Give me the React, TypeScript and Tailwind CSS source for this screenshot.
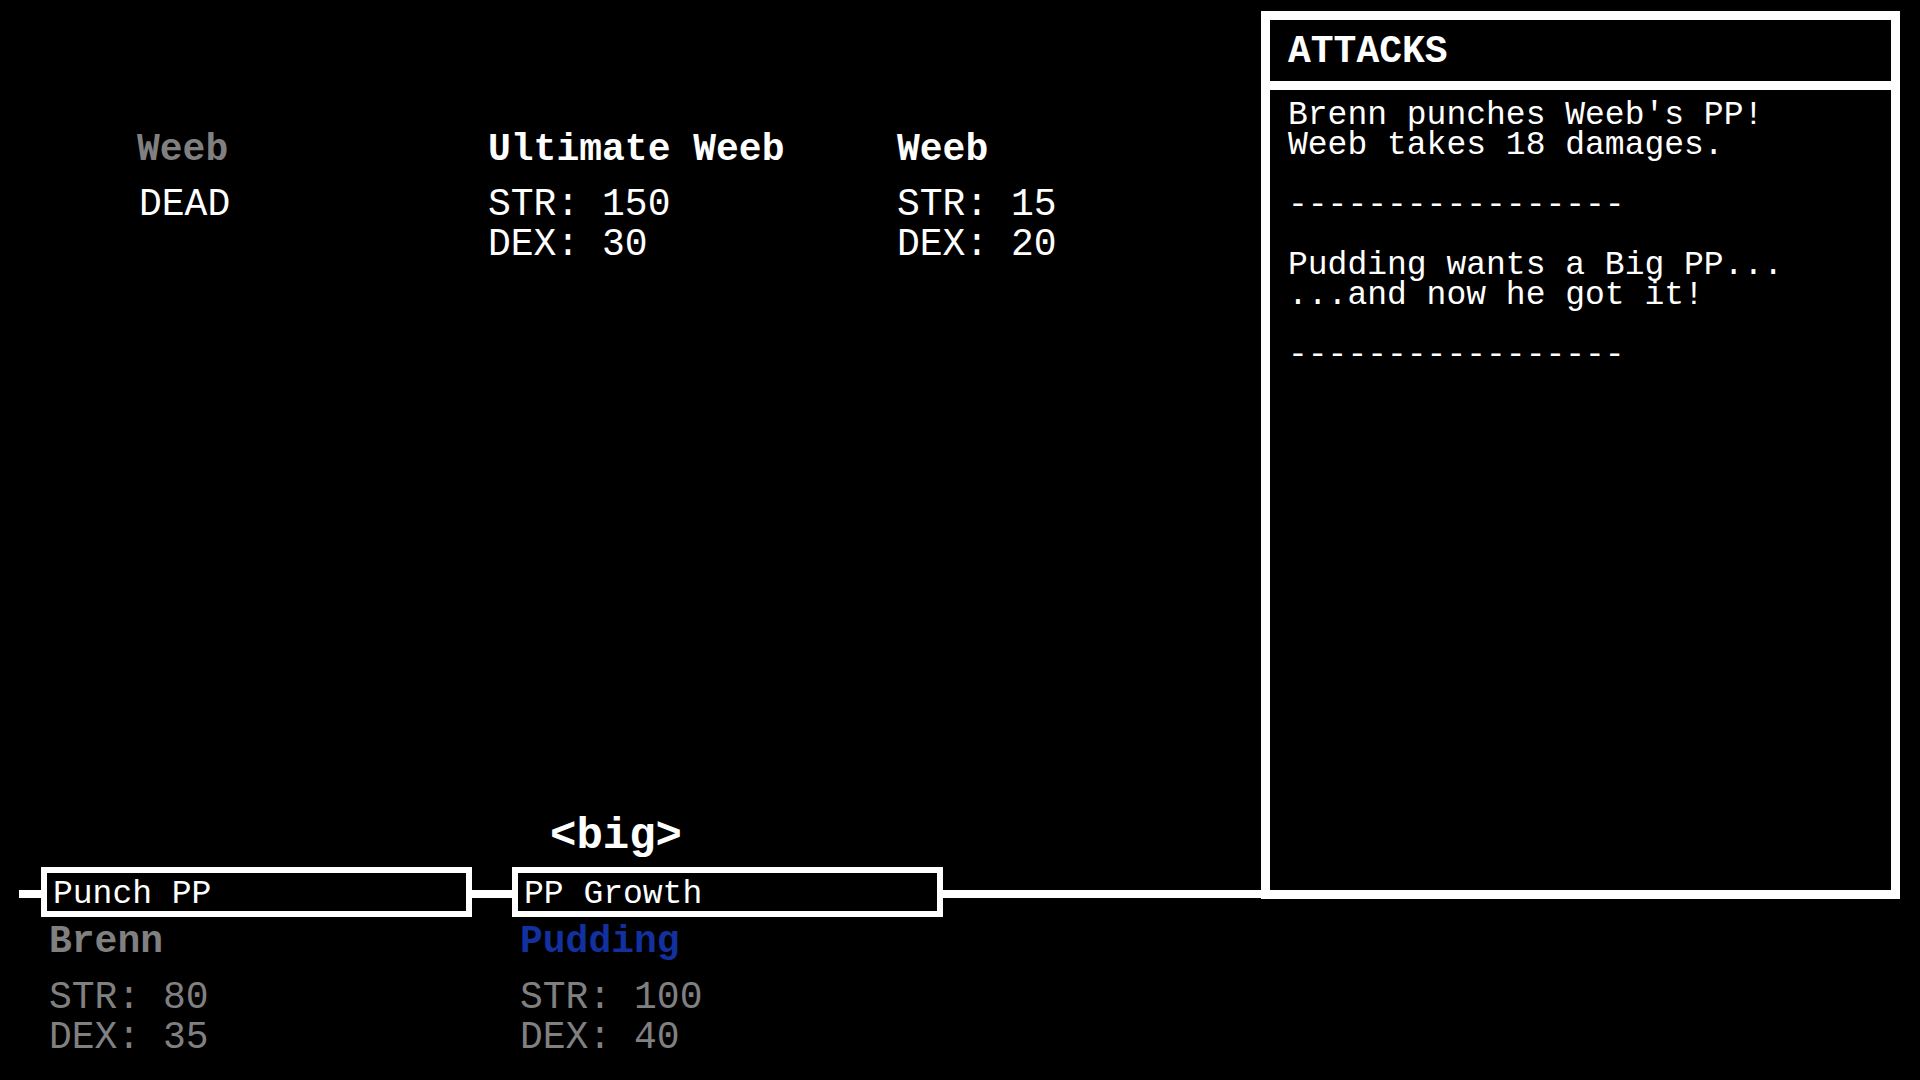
// Battle screen: enemy stats on top, skill chain with party below, attack log panel on the right.

interface Fighter {
  name: string
  dead?: boolean
  str?: number
  dex?: number
}

const enemies: { fighter: Fighter; width: string }[] = [
  { fighter: { name: 'Weeb', dead: true }, width: 'w-[351px]' },
  { fighter: { name: 'Ultimate Weeb', str: 150, dex: 30 }, width: 'w-[409px]' },
  { fighter: { name: 'Weeb', str: 15, dex: 20 }, width: 'w-[300px]' },
]

const party = [
  { name: 'Brenn', color: 'text-[#808080]', str: 80, dex: 35 },
  { name: 'Pudding', color: 'text-[#12309e]', str: 100, dex: 40 },
]

const log = `Brenn punches Weeb's PP!
Weeb takes 18 damages.

-----------------

Pudding wants a Big PP...
...and now he got it!

-----------------`

function EnemyColumn({ fighter, width }: { fighter: Fighter; width: string }) {
  return (
    <div className={`${width} shrink-0`}>
      <div
        className={`h-[40px] text-[38px] leading-[40px] font-bold ${
          fighter.dead ? 'text-[#808080]' : 'text-white'
        }`}
      >
        {fighter.name}
      </div>
      <div className="mt-[15px] text-[38px] leading-[40px] text-white whitespace-pre">
        {fighter.dead ? (
          <div className="pl-[2px]">DEAD</div>
        ) : (
          <>
            <div>STR: {fighter.str}</div>
            <div>DEX: {fighter.dex}</div>
          </>
        )}
      </div>
    </div>
  )
}

function Line({ className = '' }: { className?: string }) {
  return <div className={`h-[8px] mt-[23px] bg-white ${className}`} />
}

function SkillBox({ label }: { label: string }) {
  return (
    <div className="w-[431px] h-[50px] shrink-0 border-[6px] border-white bg-black pl-[6px] pt-[3px] text-[33px] leading-[38px] text-white whitespace-pre">
      {label}
    </div>
  )
}

export default function App() {
  return (
    <div className="w-[1920px] h-[1080px] bg-black overflow-hidden font-[family-name:'Liberation_Mono',monospace]">
      <div className="flex">
        {/* left side: enemies, skill chain */}
        <div className="w-[1261px] h-[917px] shrink-0 flex flex-col">
          <div className="flex pt-[130px] pl-[137px]">
            {enemies.map((e, i) => (
              <EnemyColumn key={i} fighter={e.fighter} width={e.width} />
            ))}
          </div>
          <div className="mt-auto h-[40px] pl-[550px] text-[44px] leading-[46px] font-bold text-white">
            {'<big>'}
          </div>
          <div className="mt-[14px] flex h-[50px] items-start">
            <Line className="ml-[19px] w-[22px]" />
            <SkillBox label="Punch PP" />
            <Line className="w-[40px]" />
            <SkillBox label="PP Growth" />
            <Line className="flex-1" />
          </div>
        </div>

        {/* attack log */}
        <div className="w-[639px] h-[888px] mt-[11px] shrink-0 border-[9px] border-white flex flex-col">
          <div className="h-[70px] border-b-[9px] border-white px-[18px] pt-[3px] text-[38px] leading-[58px] font-bold text-white">
            ATTACKS
          </div>
          <div className="flex-1 pt-[11px] px-[18px] text-[33px] leading-[30px] text-white whitespace-pre">
            {log}
          </div>
        </div>
      </div>

      {/* party */}
      <div className="flex pl-[49px] mt-[5px]">
        {party.map((p) => (
          <div key={p.name} className="w-[471px] shrink-0">
            <div className={`h-[40px] text-[38px] leading-[40px] font-bold ${p.color}`}>{p.name}</div>
            <div className="mt-[16px] text-[38px] leading-[40px] text-[#808080] whitespace-pre">
              <div>STR: {p.str}</div>
              <div>DEX: {p.dex}</div>
            </div>
          </div>
        ))}
      </div>
    </div>
  )
}
